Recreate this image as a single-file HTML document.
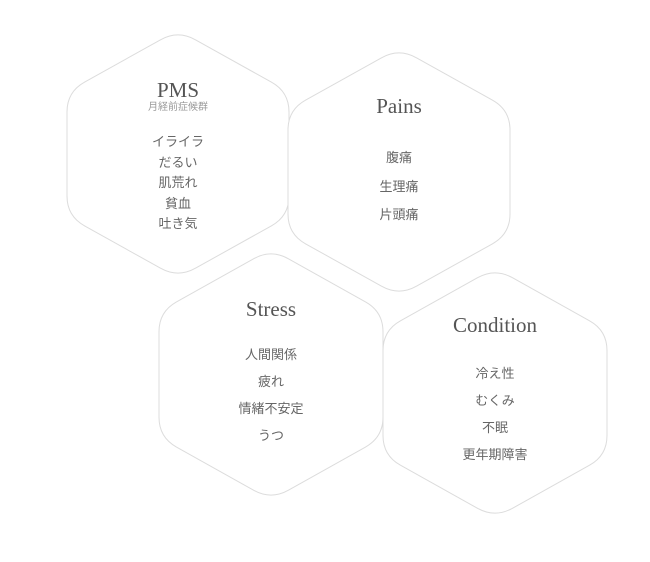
<!DOCTYPE html>
<html><head><meta charset="utf-8"><style>
body{margin:0;background:#fff;width:650px;height:562px;overflow:hidden;position:relative;font-family:"Liberation Sans","Noto Sans CJK JP",sans-serif}
svg{position:absolute;left:0;top:0}
.t{position:absolute;text-align:center;width:200px;color:#666;font-size:13px}
.h{font-family:"Liberation Serif","Noto Serif CJK SC",serif;font-size:21px;color:#555;line-height:24px}
.s{font-size:10px;color:#999;line-height:12px}
</style></head><body>
<svg id="s" width="650" height="562"></svg>
<div class="t" style="left:78px;top:78px"><div class="h">PMS</div><div class="s">月経前症候群</div>
<div style="line-height:20.5px;margin-top:18px">イライラ<br>だるい<br>肌荒れ<br>貧血<br>吐き気</div></div>
<div class="t" style="left:299px;top:94px"><div class="h">Pains</div>
<div style="line-height:28.5px;margin-top:26px">腹痛<br>生理痛<br>片頭痛</div></div>
<div class="t" style="left:171px;top:297px"><div class="h">Stress</div>
<div style="line-height:27px;margin-top:20px">人間関係<br>疲れ<br>情緒不安定<br>うつ</div></div>
<div class="t" style="left:395px;top:313px"><div class="h">Condition</div>
<div style="line-height:27px;margin-top:23px">冷え性<br>むくみ<br>不眠<br>更年期障害</div></div>
<script>
var hs=[[67,30,289,278],[288,48,510,296],[159,249,383,500],[383,268,607,518]];
var s=document.getElementById('s'),out='';
hs.forEach(function(h){
var l=h[0],t=h[1],r=h[2],b=h[3],cx=(l+r)/2,o=(b-t)/4;
var p=[[cx,t],[r,t+o],[r,b-o],[cx,b],[l,b-o],[l,t+o]],R=20,d='';
for(var i=0;i<6;i++){var P=p[i],A=p[(i+5)%6],B=p[(i+1)%6];
function pt(Q){var dx=Q[0]-P[0],dy=Q[1]-P[1],L=Math.hypot(dx,dy);return [P[0]+dx/L*R,P[1]+dy/L*R];}
var a=pt(A),c=pt(B);d+=(i?'L':'M')+a[0]+' '+a[1]+'Q'+P[0]+' '+P[1]+' '+c[0]+' '+c[1];}
out+='<path d="'+d+'Z" fill="#fff" stroke="#dcdcdc" stroke-width="1"/>';});
s.innerHTML=out;
</script>
</body></html>
